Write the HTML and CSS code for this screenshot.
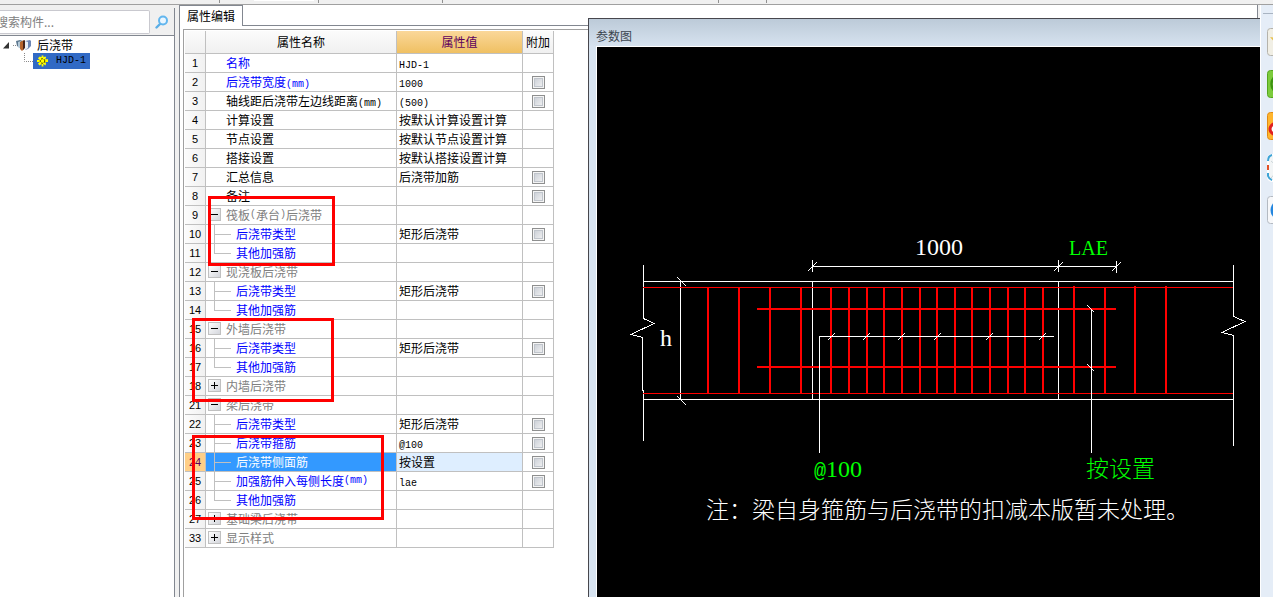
FILE: index.html
```html
<!DOCTYPE html>
<html lang="zh-CN">
<head>
<meta charset="utf-8">
<title>属性编辑</title>
<link rel="stylesheet" href="styles.css">
</head>
<body>
<div class="toolbar"><i class="sep s1"></i><i class="patch"></i><i class="sep s2"></i><i class="sep s3"></i><i class="sep s4"></i><i class="sep s5"></i></div>
<div class="workspace">
  <aside class="sidebar">
    <form class="search">
      <input type="text" class="search-input" placeholder="搜索构件..." aria-label="搜索构件">
      <button type="button" class="search-btn" aria-label="搜索">
        <svg width="14" height="14" viewBox="0 0 14 14"><path d="M1.500 12.500 5 9" stroke="#5aaee6" stroke-width="2.4" stroke-linecap="round"/><circle cx="8" cy="5.500" r="4" fill="#eaf6ff" stroke="#62b6ee" stroke-width="2"/></svg>
      </button>
    </form>
    <div class="tree">
      <div class="node">
        <svg width="34" height="16" viewBox="0 0 34 16"><path d="M3 11.500 9 5v6.500z" fill="#333"/><path d="M13 8.500h4" stroke="#888" stroke-dasharray="1 1"/><path d="M16 4l4-1 3 1v6l-3 1-3-2z" fill="#5d788f"/><path d="M18 5l3-1v8l-3-2z" fill="#b4c9d8"/><path d="M20 5l4-2v9l-2 2-2-2z" fill="#b5632b"/><path d="M23 4l2-1v8l-2 2z" fill="#452318"/><path d="M25 4l5-1 1 1v5l-3 3-3 1z" fill="#6c86b4"/><path d="M25 4l3 1v6l-3 2z" fill="#e8eef5"/></svg>
        <span class="node-text">后浇带</span>
      </div>
      <div class="node">
        <svg class="guide" width="33" height="17" viewBox="0 0 33 17"><path d="M24.500 0v8.500H33" fill="none" stroke="#888" stroke-dasharray="1 1"/></svg>
        <a href="#hjd" class="leaf"><svg width="11" height="12" viewBox="0 0 12 12"><path d="M5 0h2v2l2-1 1 1-1 2h3v3h-3l1 2-1 2-2-2v3H5V9l-2 2-2-2 2-2H0V5h3L1 3l2-2 2 1z" fill="#ff0"/><circle cx="6" cy="6" r="2.500" fill="none" stroke="#221d00" stroke-dasharray="2 1"/><path d="M5 5h2v2H5z" fill="#ff0"/></svg><span class="latin">HJD-1</span></a>
      </div>
    </div>
  </aside>
  <main class="editor">
    <div class="tabs"><button type="button" class="tab">属性编辑</button><span class="tab-rest"></span></div>
    <div class="frame">
      <table class="props">
        <colgroup><col class="c-num"><col class="c-name"><col class="c-val"><col class="c-add"></colgroup>
        <thead><tr><th></th><th>属性名称</th><th class="hot">属性值</th><th>附加</th></tr></thead>
        <tbody>
          <tr><th>1</th><td class="top key">名称</td><td><span class="latin">HJD-1</span></td><td></td></tr>
          <tr><th>2</th><td class="top key">后浇带宽度<span class="latin">(mm)</span></td><td><span class="latin">1000</span></td><td><input type="checkbox" aria-label="附加 2"></td></tr>
          <tr><th>3</th><td class="top">轴线距后浇带左边线距离<span class="latin">(mm)</span></td><td><span class="latin">(500)</span></td><td><input type="checkbox" aria-label="附加 3"></td></tr>
          <tr><th>4</th><td class="top">计算设置</td><td>按默认计算设置计算</td><td></td></tr>
          <tr><th>5</th><td class="top">节点设置</td><td>按默认节点设置计算</td><td></td></tr>
          <tr><th>6</th><td class="top">搭接设置</td><td>按默认搭接设置计算</td><td></td></tr>
          <tr><th>7</th><td class="top">汇总信息</td><td>后浇带加筋</td><td><input type="checkbox" aria-label="附加 7"></td></tr>
          <tr><th>8</th><td class="top">备注</td><td></td><td><input type="checkbox" aria-label="附加 8"></td></tr>
          <tr><th>9</th><td class="group"><div class="line"><button type="button" class="toggle" aria-label="折叠"></button>筏板<span class="latin">(</span>承台<span class="latin">)</span>后浇带</div></td><td></td><td></td></tr>
          <tr><th>10</th><td class="key"><div class="line"><i class="branch"></i>后浇带类型</div></td><td>矩形后浇带</td><td><input type="checkbox" aria-label="附加 10"></td></tr>
          <tr><th>11</th><td class="key"><div class="line"><i class="branch last"></i>其他加强筋</div></td><td></td><td></td></tr>
          <tr><th>12</th><td class="group"><div class="line"><button type="button" class="toggle" aria-label="折叠"></button>现浇板后浇带</div></td><td></td><td></td></tr>
          <tr><th>13</th><td class="key"><div class="line"><i class="branch"></i>后浇带类型</div></td><td>矩形后浇带</td><td><input type="checkbox" aria-label="附加 13"></td></tr>
          <tr><th>14</th><td class="key"><div class="line"><i class="branch last"></i>其他加强筋</div></td><td></td><td></td></tr>
          <tr><th>15</th><td class="group"><div class="line"><button type="button" class="toggle" aria-label="折叠"></button>外墙后浇带</div></td><td></td><td></td></tr>
          <tr><th>16</th><td class="key"><div class="line"><i class="branch"></i>后浇带类型</div></td><td>矩形后浇带</td><td><input type="checkbox" aria-label="附加 16"></td></tr>
          <tr><th>17</th><td class="key"><div class="line"><i class="branch last"></i>其他加强筋</div></td><td></td><td></td></tr>
          <tr><th>18</th><td class="group"><div class="line"><button type="button" class="toggle plus" aria-label="展开"></button>内墙后浇带</div></td><td></td><td></td></tr>
          <tr><th>21</th><td class="group"><div class="line"><button type="button" class="toggle" aria-label="折叠"></button>梁后浇带</div></td><td></td><td></td></tr>
          <tr><th>22</th><td class="key"><div class="line"><i class="branch"></i>后浇带类型</div></td><td>矩形后浇带</td><td><input type="checkbox" aria-label="附加 22"></td></tr>
          <tr><th>23</th><td class="key"><div class="line"><i class="branch"></i>后浇带箍筋</div></td><td><span class="latin">@100</span></td><td><input type="checkbox" aria-label="附加 23"></td></tr>
          <tr class="selected"><th>24</th><td class="key"><div class="line"><i class="branch"></i>后浇带侧面筋</div></td><td>按设置</td><td><input type="checkbox" aria-label="附加 24"></td></tr>
          <tr><th>25</th><td class="key"><div class="line"><i class="branch"></i>加强筋伸入每侧长度<span class="latin">(mm)</span></div></td><td><span class="latin">lae</span></td><td><input type="checkbox" aria-label="附加 25"></td></tr>
          <tr><th>26</th><td class="key"><div class="line"><i class="branch last"></i>其他加强筋</div></td><td></td><td></td></tr>
          <tr><th>27</th><td class="group"><div class="line"><button type="button" class="toggle plus" aria-label="展开"></button>基础梁后浇带</div></td><td></td><td></td></tr>
          <tr><th>33</th><td class="group"><div class="line"><button type="button" class="toggle plus" aria-label="展开"></button>显示样式</div></td><td></td><td></td></tr>
        </tbody>
      </table>
      <div class="mark m1"></div><div class="mark m2"></div><div class="mark m3"></div>
    </div>
  </main>
  <section class="viewer">
    <div class="viewer-top"></div>
    <div class="dialog">
      <h2 class="dialog-title">参数图</h2>
      <div class="canvas">
        <svg class="drawing" viewBox="597 47 663 550" preserveAspectRatio="xMinYMin meet">
          <g fill="none" stroke="#fff" shape-rendering="crispEdges">
            <path d="M643 281.500H1233M643 399.500H1233M812.500 281V400M1058.500 281V400M680.500 281V400"/>
            <path d="M643.500 265V318.500L654 323.500 631 334.500 642.500 337.500V390H643.500V441"/>
            <path d="M1233.500 265V316.500L1245 321.500 1222 332.500 1233.500 335.500V446"/>
            <path d="M677 277l9 9M677 396l9 9"/>
            <path d="M812 266.500H1117M812.500 260v12M1058.500 260v12M1116.500 261v12M808 271l9-9M1054 271l9-9M1112 271l9-9"/>
          </g>
          <g fill="none" stroke="#f00" shape-rendering="crispEdges">
            <path d="M643 287.500H1233M643 393.500H1233"/>
            <path stroke-width="2" d="M757 309H1116M757 367H1116M708 287V394M739 287V394M770 287V394M801 287V394M831 287V394M849 287V394M867 287V394M884 287V394M902 287V394M920 287V394M937 287V394M955 287V394M972 287V394M990 287V394M1008 287V394M1025 287V394M1043 287V394M1074 286V394M1105 287V394M1135 286V394M1166 286V394"/>
          </g>
          <g fill="none" stroke="#fff" shape-rendering="crispEdges">
            <path d="M819.500 453V336.500H1054M1091.500 309V453"/>
            <path d="M828 340l7-7M863 340l7-7M898 340l7-7M934 340l7-7M986 340l7-7M1039 340l7-7M1087 305l7 7M1087 364l7 7"/>
          </g>
          <g class="d-text">
            <text x="915" y="255">1000</text>
            <text x="660" y="346">h</text>
            <text class="green small" x="1069" y="255">LAE</text>
            <text class="green" x="814" y="477"><tspan class="mono">@</tspan>100</text>
            <text class="green cjk" x="1086" y="477">按设置</text>
            <text class="cjk" x="706" y="518">注：梁自身箍筋与后浇带的扣减本版暂未处理。</text>
          </g>
        </svg>
      </div>
    </div>
  </section>
  <nav class="rail" aria-label="工具">
    <span class="rail-top"></span>
    <button type="button" class="tool" aria-label="收藏"><svg viewBox="0 0 28 28"><rect x=".5" y=".5" width="27" height="27" rx="3" fill="#f1efe5" stroke="#b5b3ab"/><path d="M3 9l7 1 4-6 3 7 7 1-6 5 1 7-6-4-6 3 2-7z" fill="#e8c24d"/></svg></button>
    <button type="button" class="tool" aria-label="刷新"><svg viewBox="0 0 28 28"><rect x=".5" y=".5" width="27" height="27" rx="3" fill="#7ccb3c" stroke="#55a51e"/><circle cx="14" cy="14" r="9.500" fill="#b9e889" stroke="#3c9410" stroke-width="2.500"/></svg></button>
    <button type="button" class="tool" aria-label="微博"><svg viewBox="0 0 28 28"><rect x=".5" y=".5" width="27" height="27" rx="3" fill="#ffb52e" stroke="#e08a12"/><ellipse cx="12" cy="17" rx="9" ry="6.500" fill="#fff" stroke="#e02020" stroke-width="3"/></svg></button>
    <button type="button" class="tool" aria-label="邮件"><svg viewBox="0 0 28 28"><rect x="1" y="1" width="26" height="26" rx="4" fill="#f2f5f6" stroke="#fff" stroke-width="2"/><path d="M1 7Q1 2 5 1M1 19v3q1 3 4 4" fill="none" stroke="#3ea4d6" stroke-width="2"/><path d="M1 11v5" stroke="#e35025" stroke-width="2"/><path d="M4 7l10 9L24 7M4 24l8-9" fill="none" stroke="#ccd5d8"/></svg></button>
    <button type="button" class="tool" aria-label="帮助"><svg viewBox="0 0 28 28"><rect x=".5" y=".5" width="27" height="27" rx="3" fill="#f7f8fa" stroke="#b4bac2"/><circle cx="14" cy="14" r="10.500" fill="#2386df"/></svg></button>
  </nav>
</div>
</body>
</html>
```
FILE: styles.css
```css
* { box-sizing: border-box; }
body {
  margin: 0;
  height: 100vh;
  overflow: hidden;
  display: flex;
  flex-direction: column;
  background: #f0f0f0;
  color: #000;
  font: 12px/18px "Noto Sans CJK SC", sans-serif;
}
button, input { font: inherit; margin: 0; padding: 0; border: 0; background: none; }
svg { display: block; }
.latin { font-family: "Liberation Mono", monospace; font-size: 10px; line-height: 1; }

.toolbar { height: 5px; flex: none; display: flex; border-bottom: 1px solid #a0a0a0; }
.sep { width: 1px; height: 3px; background: #909090; }
.s1 { margin-left: 219px; }
.patch { margin-left: 34px; width: 60px; height: 1px; background: #fff; }
.s2 { margin-left: 4px; }
.s3 { margin-left: 123px; }
.s4 { margin-left: 275px; }
.s5 { margin-left: 47px; }

.workspace { flex: 1; min-height: 0; display: grid; grid-template-columns: 175px 413px 1fr 13px; }

.sidebar { margin-top: 3px; border-right: 1px solid #828790; display: flex; flex-direction: column; }
.search { display: flex; align-items: center; height: 28px; padding-top: 2px; padding-bottom: 2px; border-bottom: 1px solid #828790; }
.search-input { flex: 1; min-width: 0; height: 24px; border: 1px solid #c9c9cf; border-left: 0; border-radius: 0 2px 2px 0; background: #fff; text-indent: -4px; }
.search-input::placeholder { color: #808080; opacity: 1; }
.search-btn { width: 24px; display: flex; justify-content: center; }
.tree { flex: 1; background: #fff; padding-top: 1px; }
.node { display: flex; align-items: center; height: 16px; }
.node-text { padding-left: 3px; }
.leaf { display: flex; align-items: center; gap: 8px; height: 16px; padding: 0 4px; background: #316ac5; color: #000; text-decoration: none; }

.editor { margin-left: 4px; border-left: 1px solid #828790; background: #fff; display: flex; flex-direction: column; min-height: 0; }
.tabs { display: flex; height: 21px; }
.tab { width: 63px; border-top: 1px solid #828790; border-right: 1px solid #828790; }
.tab-rest { flex: 1; border-bottom: 1px solid #828790; }
.frame { position: relative; flex: 1; margin: 3px 0 0 3px; padding: 1px 0 0 1px; border-top: 1px solid #a0a0a0; border-left: 1px solid #a0a0a0; }

.props { table-layout: fixed; width: 369px; border-collapse: separate; border-spacing: 0; }
.c-num { width: 21px; }
.c-name { width: 191px; }
.c-val { width: 126px; }
.c-add { width: 31px; }
.props th, .props td { height: 19px; padding: 0; border: solid #c0c0c0; border-width: 0 1px 1px 0; font-weight: 400; white-space: nowrap; line-height: 18px; vertical-align: top; }
.props thead th { height: 23px; background: linear-gradient(#fbfbfb, #f0f0f0); vertical-align: middle; }
.props thead .hot { background: linear-gradient(#fad799, #efc062); color: #5c005c; }
.props tbody th { background: linear-gradient(90deg, #fcfcfc, #f1f1f1); font-family: "Liberation Sans", sans-serif; font-size: 11px; }
.props td { padding-left: 2px; }
.props td.top { padding-left: 20px; }
.props td:nth-child(2):not(.top) { padding-left: 0; }
.props td:last-child { padding: 0; text-align: center; }
.key { color: #00f; }
.group { color: #808080; }
.line { display: flex; height: 18px; }
.line .latin { line-height: 18px; }
.toggle { width: 13px; height: 13px; margin: 2px 5px 0 2px; border: 1px solid #c0c0c0; background: linear-gradient(#000, #000) center / 7px 1px no-repeat, linear-gradient(135deg, #fff, #d4d6dc); }
.toggle.plus { background: linear-gradient(#000, #000) center / 7px 1px no-repeat, linear-gradient(#000, #000) center / 1px 7px no-repeat, linear-gradient(135deg, #fff, #d4d6dc); }
.branch { width: 17px; margin: 0 5px 0 8px; background: linear-gradient(#c0c0c0, #c0c0c0) 0 0 / 1px 100% no-repeat, linear-gradient(#c0c0c0, #c0c0c0) 0 9px / 100% 1px no-repeat; }
.branch.last { background-size: 1px 9px, 100% 1px; }
.props input { appearance: none; display: block; width: 13px; height: 13px; margin: 3px auto 0; border: 1px solid #8e8f8f; background: linear-gradient(135deg, #c5cad2, #f6f6f6); box-shadow: inset 0 0 0 1px #f4f4f4, inset 0 0 0 2px #c0c5cc; }
.props .selected th { background: #ffcf87; color: #5c005c; }
.props .selected td:nth-child(2) { background: #3399ff; color: #fff; }
.props .selected td:nth-child(3) { background: #deeeff; }

/* Highlight frames laid over the table */
.mark { position: absolute; border: 3px solid #f00; pointer-events: none; }
.m1 { left: 24px; top: 166px; width: 127px; height: 70px; }
.m2 { left: 8px; top: 288px; width: 142px; height: 84px; }
.m3 { left: 8px; top: 405px; width: 192px; height: 85px; }

.viewer { display: flex; flex-direction: column; min-width: 0; min-height: 0; }
.viewer-top { height: 13px; flex: none; margin-right: 2px; background: #fff; border-right: 1px solid #828790; }
.dialog { flex: 1; min-height: 0; display: flex; flex-direction: column; border: solid #47474d; border-width: 1px 0 0 1px; background: #d7e3f0; }
.dialog-title { margin: 0; height: 27px; padding: 8px 7px 0; background: linear-gradient(#bccad8, #d6e2ef); color: #3c4650; font-size: 12px; font-weight: 400; line-height: 18px; }
.canvas { flex: 1; min-height: 0; margin-left: 7px; border: solid #fff; border-width: 1px 0 0 1px; background: #000; overflow: hidden; }
.drawing { width: 100%; }
.d-text { fill: #fff; font-family: "Liberation Serif", serif; font-size: 24px; }
.d-text .green { fill: #0f0; }
.d-text .small { font-size: 20px; }
.d-text .mono { font-family: "Liberation Mono", monospace; font-size: 20px; }
.d-text .cjk { font-family: "Noto Sans CJK SC", sans-serif; font-size: 23px; font-weight: 300; }

.rail { display: flex; flex-direction: column; gap: 14px; padding-left: 6px; overflow: hidden; background: #e5edf7; border-left: 1px solid #fff; }
.rail-top { height: 9px; flex: none; margin-left: -4px; border-bottom: 1px solid #a9b4c2; }
.tool { width: 28px; height: 28px; flex: none; }
```
